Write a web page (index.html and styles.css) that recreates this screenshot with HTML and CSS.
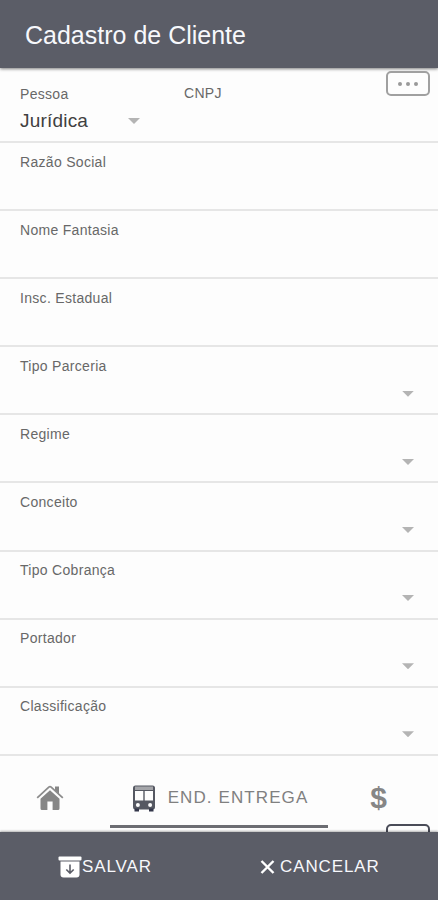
FILE: index.html
```html
<!DOCTYPE html>
<html lang="pt-BR">
<head>
    <meta charset="UTF-8">
    <meta name="viewport" content="width=device-width, initial-scale=1.0">
    <title>Cadastro de Cliente</title>
    <link rel="stylesheet" href="styles.css">
</head>
<body>
    <header class="header">
        <h1>Cadastro de Cliente</h1>
    </header>
    <main class="form">
        <div class="row first">
            <div class="pessoa">
                <div class="label">Pessoa</div>
                <div class="value">Jurídica <span class="arrow"></span></div>
            </div>
            <div class="label cnpj">CNPJ</div>
            <button class="more"><span></span><span></span><span></span></button>
        </div>
        <div class="row"><div class="label">Razão Social</div></div>
        <div class="row"><div class="label">Nome Fantasia</div></div>
        <div class="row"><div class="label">Insc. Estadual</div></div>
        <div class="row"><div class="label">Tipo Parceria</div><span class="arrow"></span></div>
        <div class="row"><div class="label">Regime</div><span class="arrow"></span></div>
        <div class="row"><div class="label">Conceito</div><span class="arrow"></span></div>
        <div class="row"><div class="label">Tipo Cobrança</div><span class="arrow"></span></div>
        <div class="row"><div class="label">Portador</div><span class="arrow"></span></div>
        <div class="row"><div class="label">Classificação</div><span class="arrow"></span></div>
    </main>
    <nav class="tabs">
        <a class="tab">
            <svg width="28" height="27" viewBox="0 0 28 27">
                <path d="M19 2.500h4v8l-4-4z" fill="#868686"/>
                <path d="M14 6.200L23.500 14.800V24.500a1.500 1.500 0 0 1-1.500 1.500H16.600V17.500H11.400V26H6A1.500 1.500 0 0 1 4.500 24.500V14.800z" fill="#868686"/>
                <path d="M1.200 13.800L12.800 3.100Q14 2.100 15.200 3.100L26.800 13.800" fill="none" stroke="#8c8c8c" stroke-width="1.800"/>
            </svg>
        </a>
        <a class="tab active">
            <svg width="24" height="27" viewBox="0 0 24 27">
                <rect x="1" y="0.500" width="22" height="24" rx="2.500" fill="#555862"/>
                <rect x="3" y="1.500" width="18" height="3.500" fill="#a5a6aa"/>
                <path d="M3 6h8.300v9.500H3zM12.700 6h8.300v9.500h-8.300z" fill="#fdfdfd"/>
                <circle cx="5.900" cy="20" r="2" fill="#fdfdfd"/>
                <circle cx="18.100" cy="20" r="2" fill="#fdfdfd"/>
                <path d="M2.500 23.500h4.500v3H2.500zM17 23.500h4.500v3h-4.500z" fill="#33364a"/>
            </svg>
            <span>END. ENTREGA</span>
        </a>
        <a class="tab money">$</a>
        <span class="peek"></span>
    </nav>
    <footer class="footer">
        <button class="action">
            <svg width="24" height="23" viewBox="0 0 24 23">
                <rect x="0.500" y="0.500" width="23" height="4" rx="1" fill="#fff"/>
                <path d="M2.500 5.500h19v13a3 3 0 0 1-3 3h-13a3 3 0 0 1-3-3z" fill="#fff"/>
                <path d="M12 8.500v8.500M8.300 13.500L12 17.100L15.700 13.500" fill="none" stroke="#5b5d67" stroke-width="1.600"/>
            </svg>
            <span>SALVAR</span>
        </button>
        <button class="action cancel">
            <svg width="15" height="14" viewBox="0 0 15 14">
                <path d="M1.500 1L13.500 13M13.500 1L1.500 13" stroke="#fff" stroke-width="2.400"/>
            </svg>
            <span>CANCELAR</span>
        </button>
    </footer>
</body>
</html>
```
FILE: styles.css
```css
*{
    margin: 0;
    padding: 0;
    box-sizing: border-box;
}
body{
    font-family: "Liberation Sans", Arial, sans-serif;
    background-color: #fdfdfd;
    width: 438px;
    height: 900px;
    display: flex;
    flex-direction: column;
    overflow: hidden;
}
.header{
    height: 68px;
    padding: 21px 25px 0;
    background-color: #5b5d67;
    box-shadow: 0 1px 3px rgba(0, 0, 0, 0.5);
}
h1{
    font-size: 25px;
    font-weight: 400;
    line-height: 29px;
    color: #f7f8fc;
}
.row{
    display: flex;
    justify-content: space-between;
    height: 68.1px;
    padding: 9.500px 24px 0 20px;
    border-bottom: 2px solid #e6e6e6;
}
.first{
    height: 75px;
    padding: 0 8px 0 20px;
    justify-content: flex-start;
}
.label{
    font-size: 14px;
    line-height: 18px;
    letter-spacing: .3px;
    color: #686868;
}
.arrow{
    width: 12px;
    height: 6px;
    margin-top: 34px;
    background-color: #b4b4b4;
    clip-path: polygon(0 0, 100% 0, 50% 100%);
}
.pessoa{
    width: 164px;
    padding-top: 17px;
}
.value{
    display: flex;
    justify-content: space-between;
    align-items: center;
    width: 120px;
    margin-top: 7px;
    font-size: 19px;
    line-height: 22px;
    letter-spacing: .2px;
    color: #404040;
}
.value .arrow{
    margin-top: 0;
}
.cnpj{
    padding-top: 16px;
}
.more{
    display: flex;
    justify-content: center;
    align-items: center;
    gap: 4px;
    width: 44px;
    height: 25px;
    margin: 3px 0 0 auto;
    border: 2px solid #a0a0a0;
    border-radius: 5px;
    background-color: #fdfdfd;
}
.more span{
    width: 4px;
    height: 4px;
    border-radius: 50%;
    background-color: #999;
}
.tabs{
    position: relative;
    flex: 1;
    display: flex;
    overflow: hidden;
}
.tab{
    display: flex;
    justify-content: center;
    align-items: center;
    width: 110px;
    height: 72px;
    padding-top: 12px;
}
.tab:first-child{
    width: 100px;
    margin-right: 10px;
}
.active{
    width: 218px;
    padding-top: 16px;
    padding-left: 2px;
    gap: 12px;
    border-bottom: 3px solid #6c6d72;
    font-size: 17px;
    letter-spacing: 1.1px;
    color: #808080;
}
.money{
    width: 101px;
    font-size: 30px;
    font-weight: 700;
    color: #868686;
}
/* top edge of the next button, cut off by the footer */
.peek{
    position: absolute;
    right: 8px;
    bottom: -17px;
    width: 44px;
    height: 25px;
    border: 2px solid #4a4c58;
    border-radius: 5px;
}
.footer{
    position: relative;
    display: flex;
    height: 68px;
    background-color: #5b5d67;
    box-shadow: 0 -1px 2px rgba(0, 0, 0, 0.3);
}
.action{
    display: flex;
    align-items: center;
    width: 202px;
    padding: 2px 0 0 58px;
    border: none;
    background: none;
    font-family: inherit;
    font-size: 17px;
    letter-spacing: .9px;
    color: #f7f8fc;
}
.cancel{
    width: 236px;
    gap: 5px;
}
```
